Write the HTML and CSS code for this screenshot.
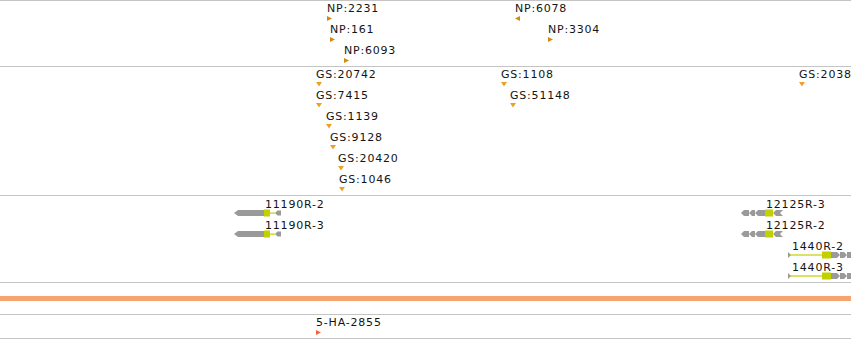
FILE: index.html
```html
<!DOCTYPE html>
<html>
<head>
<meta charset="utf-8">
<link rel="stylesheet" href="styles.css">
</head>
<body>
<div class="view">
  <section class="track t-np">
    <div class="feat" style="left:327px;top:1px"><span class="label">NP:2231</span><svg class="tri" width="5" height="5" viewBox="0 0 5 5"><polygon points="0,0 5,2.5 0,5" class="np"/></svg></div>
    <div class="feat" style="left:330px;top:22px"><span class="label">NP:161</span><svg class="tri" width="5" height="5" viewBox="0 0 5 5"><polygon points="0,0 5,2.5 0,5" class="np"/></svg></div>
    <div class="feat" style="left:344px;top:43px"><span class="label">NP:6093</span><svg class="tri" width="5" height="5" viewBox="0 0 5 5"><polygon points="0,0 5,2.5 0,5" class="np"/></svg></div>
    <div class="feat" style="left:515px;top:1px"><span class="label">NP:6078</span><svg class="tri" width="5" height="5" viewBox="0 0 5 5"><polygon points="5,0 0,2.5 5,5" class="np"/></svg></div>
    <div class="feat" style="left:548px;top:22px"><span class="label">NP:3304</span><svg class="tri" width="5" height="5" viewBox="0 0 5 5"><polygon points="0,0 5,2.5 0,5" class="np"/></svg></div>
  </section>
  <section class="track t-gs">
    <div class="feat" style="left:316px;top:1px"><span class="label">GS:20742</span><svg class="tri" width="6" height="5" viewBox="0 0 6 5"><polygon points="0,0 6,0 3,4.5" class="gs"/></svg></div>
    <div class="feat" style="left:316px;top:22px"><span class="label">GS:7415</span><svg class="tri" width="6" height="5" viewBox="0 0 6 5"><polygon points="0,0 6,0 3,4.5" class="gs"/></svg></div>
    <div class="feat" style="left:326px;top:43px"><span class="label">GS:1139</span><svg class="tri" width="6" height="5" viewBox="0 0 6 5"><polygon points="0,0 6,0 3,4.5" class="gs"/></svg></div>
    <div class="feat" style="left:330px;top:64px"><span class="label">GS:9128</span><svg class="tri" width="6" height="5" viewBox="0 0 6 5"><polygon points="0,0 6,0 3,4.5" class="gs"/></svg></div>
    <div class="feat" style="left:338px;top:85px"><span class="label">GS:20420</span><svg class="tri" width="6" height="5" viewBox="0 0 6 5"><polygon points="0,0 6,0 3,4.5" class="gs"/></svg></div>
    <div class="feat" style="left:339px;top:106px"><span class="label">GS:1046</span><svg class="tri" width="6" height="5" viewBox="0 0 6 5"><polygon points="0,0 6,0 3,4.5" class="gs"/></svg></div>
    <div class="feat" style="left:501px;top:1px"><span class="label">GS:1108</span><svg class="tri" width="6" height="5" viewBox="0 0 6 5"><polygon points="0,0 6,0 3,4.5" class="gs"/></svg></div>
    <div class="feat" style="left:510px;top:22px"><span class="label">GS:51148</span><svg class="tri" width="6" height="5" viewBox="0 0 6 5"><polygon points="0,0 6,0 3,4.5" class="gs"/></svg></div>
    <div class="feat" style="left:799px;top:1px"><span class="label">GS:2038</span><svg class="tri" width="6" height="5" viewBox="0 0 6 5"><polygon points="0,0 6,0 3,4.5" class="gs"/></svg></div>
  </section>
  <section class="track t-gene">
    <div class="feat gene" style="left:234px;top:2px"><span class="label off-a">11190R-2</span>
      <svg class="gsvg" width="47" height="8" viewBox="0 0 47 8"><polygon class="ex" points="0,4 4,1 30,1 30,7 4,7"/><rect class="cds" x="30" y="0.5" width="6" height="7"/><rect class="cds" x="36" y="3.5" width="5" height="1.2"/><polygon class="ex" points="41,4 43.5,1.5 47,1.5 47,6.5 43.5,6.5"/></svg></div>
    <div class="feat gene" style="left:234px;top:23px"><span class="label off-a">11190R-3</span>
      <svg class="gsvg" width="47" height="8" viewBox="0 0 47 8"><polygon class="ex" points="0,4 4,1 30,1 30,7 4,7"/><rect class="cds" x="30" y="0.5" width="6" height="7"/><rect class="cds" x="36" y="3.5" width="5" height="1.2"/><polygon class="ex" points="41,4 43.5,1.5 47,1.5 47,6.5 43.5,6.5"/></svg></div>
    <div class="feat gene" style="left:741px;top:2px"><span class="label off-b">12125R-3</span>
      <svg class="gsvg" width="42" height="8" viewBox="0 0 42 8"><polygon class="ex" points="0,4 3,1 8,1 8,7 3,7"/><polygon class="ex" points="8,4 11,1 14,1 14,7 11,7"/><polygon class="ex" points="14,4 17,1 24,1 24,7 17,7"/><rect class="cds" x="24" y="0.5" width="8" height="7"/><polygon class="ex" points="32,4 35,1 42,1 39,4 42,7 35,7"/></svg></div>
    <div class="feat gene" style="left:741px;top:23px"><span class="label off-b">12125R-2</span>
      <svg class="gsvg" width="42" height="8" viewBox="0 0 42 8"><polygon class="ex" points="0,4 3,1 8,1 8,7 3,7"/><polygon class="ex" points="8,4 11,1 14,1 14,7 11,7"/><polygon class="ex" points="14,4 17,1 24,1 24,7 17,7"/><rect class="cds" x="24" y="0.5" width="8" height="7"/><polygon class="ex" points="32,4 35,1 42,1 39,4 42,7 35,7"/></svg></div>
    <div class="feat gene" style="left:788px;top:44px"><span class="label off-c">1440R-2</span>
      <svg class="gsvg" width="64" height="8" viewBox="0 0 64 8"><polygon class="ex" points="0,1 3,4 0,7"/><rect class="cds" x="2" y="3.4" width="33" height="1.2"/><rect class="cds" x="34" y="0.5" width="9" height="7"/><polygon class="ex" points="43,1 49,1 52,4 49,7 43,7"/><polygon class="ex" points="52,1 56,1 59,4 56,7 52,7"/><polygon class="ex" points="59,1 64,1 64,7 59,7"/></svg></div>
    <div class="feat gene" style="left:788px;top:65px"><span class="label off-c">1440R-3</span>
      <svg class="gsvg" width="64" height="8" viewBox="0 0 64 8"><polygon class="ex" points="0,1 3,4 0,7"/><rect class="cds" x="2" y="3.4" width="33" height="1.2"/><rect class="cds" x="34" y="0.5" width="9" height="7"/><polygon class="ex" points="43,1 49,1 52,4 49,7 43,7"/><polygon class="ex" points="52,1 56,1 59,4 56,7 52,7"/><polygon class="ex" points="59,1 64,1 64,7 59,7"/></svg></div>
  </section>
  <div class="sep"><div class="band"></div></div>
  <section class="track t-ha">
    <div class="feat" style="left:316px;top:1px"><span class="label">5-HA-2855</span><svg class="tri" width="5" height="5" viewBox="0 0 5 5"><polygon points="0,0 5,2.5 0,5" class="ha"/></svg></div>
  </section>
</div>
</body>
</html>
```
FILE: styles.css
```css
html, body {
  margin: 0;
  padding: 0;
  background: #ffffff;
}
body {
  width: 851px;
  height: 339px;
  overflow: hidden;
  font-family: "DejaVu Sans", "Liberation Sans", sans-serif;
  font-size: 11px;
  color: #141414;
}
.view {
  display: flex;
  flex-direction: column;
  width: 851px;
}
.track {
  position: relative;
  border-top: 1px solid #c4c4c4;
  overflow: visible;
}
.t-np { height: 65px; }
.t-gs { height: 128px; }
.t-gene { height: 86px; }
.t-ha {
  height: 23px;
  border-bottom: 1px solid #c4c4c4;
}
.sep {
  border-top: 1px solid #c4c4c4;
  padding: 13px 0;
}
.band {
  height: 5px;
  background: #f4a371;
}
.feat {
  position: absolute;
  display: flex;
  flex-direction: column;
  align-items: flex-start;
  gap: 1px;
}
.label {
  line-height: 13px;
  letter-spacing: 0.8px;
  white-space: nowrap;
}
.tri { display: block; }
.np { fill: #d4890c; }
.gs { fill: #eba128; }
.ha { fill: #f2643c; }
.gene { gap: 0; }
.gsvg {
  display: block;
  margin-top: -2px;
  overflow: visible;
}
.off-a { margin-left: 31px; }
.off-b { margin-left: 25px; }
.off-c { margin-left: 4px; }
.ex { fill: #9a9a9a; }
.cds { fill: #c3d000; }
```
